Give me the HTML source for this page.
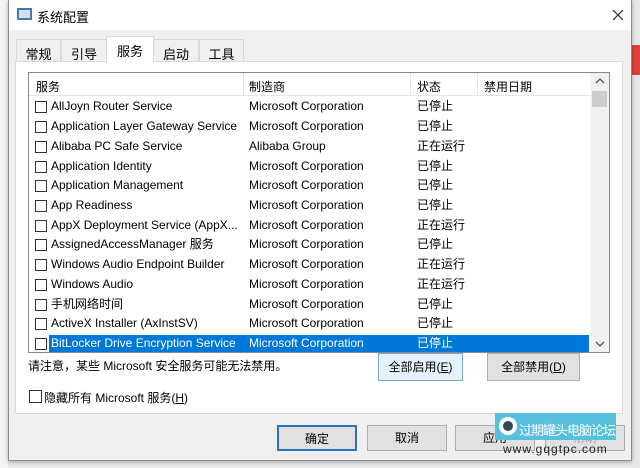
<!DOCTYPE html>
<html><head><meta charset="utf-8"><style>
*{margin:0;padding:0;box-sizing:border-box}
body{width:640px;height:468px;overflow:hidden;background:#e8e8e8;font-family:"Liberation Sans","Noto Sans CJK SC",sans-serif;font-size:12px;color:#000;position:relative}
.abs{position:absolute}
.dlg{left:8px;top:0;width:624px;height:461px;background:#f0f0f0;border:1px solid #8a8a8a;border-top:none;box-shadow:0 1px 4px rgba(0,0,0,.3)}
.title{left:0;top:0;width:622px;height:30px;background:#fff}
.tab{top:39px;height:23px;border:1px solid #d9d9d9;border-bottom:none;background:#f0f0f0;padding:4px 0 0;text-align:center;font-size:13px}
.panel{left:6px;top:61px;width:608px;height:353px;background:#fff;border:1px solid #d9d9d9}
.list{left:28px;top:72px;width:582px;height:281px;border:1px solid #828790;background:#fff;overflow:hidden}
.row{position:absolute;left:0;height:19px;width:562px;line-height:19px;white-space:nowrap}
.row span{position:absolute}
.cb{position:absolute;left:6px;top:4px;width:12px;height:12px;border:1px solid #333;background:#fff}
.sel .t{background:#0078d7;color:#fff}
.btn{position:absolute;height:26px;background:#e1e1e1;border:1px solid #adadad;text-align:center;line-height:24px;font-size:12px}
</style></head><body>
<div class="abs" style="left:0;top:0;width:8px;height:468px;background:#f4f4f4"></div>
<div class="abs" style="left:632px;top:45px;width:8px;height:30px;background:#e0403a"></div>
<div class="abs dlg">
 <div class="abs title">
  <div class="abs" style="left:8px;top:8px;width:15px;height:12px;border:2px solid #4a7aa8;background:#cfe0f0"></div>
  <div class="abs" style="left:28px;top:7px;font-size:13px">系统配置</div>
  <svg class="abs" style="left:603px;top:9px" width="12" height="12"><path d="M1 1L11 11M11 1L1 11" stroke="#222" stroke-width="1.2"/></svg>
 </div>
 <div class="abs tab" style="left:7px;width:45px">常规</div>
 <div class="abs tab" style="left:52px;width:46px">引导</div>
 <div class="abs tab" style="left:144px;width:46px">启动</div>
 <div class="abs tab" style="left:190px;width:45px">工具</div>
 <div class="abs panel"></div>
 <div class="abs tab" style="left:97px;top:36px;width:48px;height:27px;background:#fff;border-color:#d9d9d9">服务</div>
</div>
<div class="abs list">
 <div class="abs" style="left:0;top:0;width:562px;height:23px;border-bottom:1px solid #e5e5e5"></div>
 <div class="abs" style="left:214px;top:0;width:1px;height:23px;background:#e5e5e5"></div>
 <div class="abs" style="left:381px;top:0;width:1px;height:23px;background:#e5e5e5"></div>
 <div class="abs" style="left:448px;top:0;width:1px;height:23px;background:#e5e5e5"></div>
 <div class="abs" style="left:7px;top:5px">服务</div>
 <div class="abs" style="left:220px;top:5px">制造商</div>
 <div class="abs" style="left:388px;top:5px">状态</div>
 <div class="abs" style="left:455px;top:5px">禁用日期</div>
 <div class="abs" style="left:562px;top:0;width:18px;height:279px;background:#f0f0f0"></div>
 <svg class="abs" style="left:566px;top:5px" width="10" height="6"><path d="M1 5L5 1L9 5" stroke="#555" fill="none" stroke-width="1.3"/></svg>
 <div class="abs" style="left:563px;top:18px;width:15px;height:16px;background:#cdcdcd"></div>
 <svg class="abs" style="left:566px;top:268px" width="10" height="6"><path d="M1 1L5 5L9 1" stroke="#555" fill="none" stroke-width="1.3"/></svg>
 <div class="abs" style="left:0;top:24px">
  <div class="row" style="top:0"><i class="cb"></i><span style="left:22px">AllJoyn Router Service</span><span style="left:220px">Microsoft Corporation</span><span style="left:388px">已停止</span></div>
  <div class="row" style="top:20px"><i class="cb"></i><span style="left:22px">Application Layer Gateway Service</span><span style="left:220px">Microsoft Corporation</span><span style="left:388px">已停止</span></div>
  <div class="row" style="top:40px"><i class="cb"></i><span style="left:22px">Alibaba PC Safe Service</span><span style="left:220px">Alibaba Group</span><span style="left:388px">正在运行</span></div>
  <div class="row" style="top:60px"><i class="cb"></i><span style="left:22px">Application Identity</span><span style="left:220px">Microsoft Corporation</span><span style="left:388px">已停止</span></div>
  <div class="row" style="top:79px"><i class="cb"></i><span style="left:22px">Application Management</span><span style="left:220px">Microsoft Corporation</span><span style="left:388px">已停止</span></div>
  <div class="row" style="top:99px"><i class="cb"></i><span style="left:22px">App Readiness</span><span style="left:220px">Microsoft Corporation</span><span style="left:388px">已停止</span></div>
  <div class="row" style="top:119px"><i class="cb"></i><span style="left:22px">AppX Deployment Service (AppX...</span><span style="left:220px">Microsoft Corporation</span><span style="left:388px">正在运行</span></div>
  <div class="row" style="top:138px"><i class="cb"></i><span style="left:22px">AssignedAccessManager 服务</span><span style="left:220px">Microsoft Corporation</span><span style="left:388px">已停止</span></div>
  <div class="row" style="top:158px"><i class="cb"></i><span style="left:22px">Windows Audio Endpoint Builder</span><span style="left:220px">Microsoft Corporation</span><span style="left:388px">正在运行</span></div>
  <div class="row" style="top:178px"><i class="cb"></i><span style="left:22px">Windows Audio</span><span style="left:220px">Microsoft Corporation</span><span style="left:388px">正在运行</span></div>
  <div class="row" style="top:198px"><i class="cb"></i><span style="left:22px">手机网络时间</span><span style="left:220px">Microsoft Corporation</span><span style="left:388px">已停止</span></div>
  <div class="row" style="top:217px"><i class="cb"></i><span style="left:22px">ActiveX Installer (AxInstSV)</span><span style="left:220px">Microsoft Corporation</span><span style="left:388px">已停止</span></div>
  <div class="row sel" style="top:237px"><i class="cb"></i><div class="t abs" style="left:20px;top:1px;width:540px;height:18px"></div><span style="left:22px;color:#fff">BitLocker Drive Encryption Service</span><span style="left:220px;color:#fff">Microsoft Corporation</span><span style="left:388px;color:#fff">已停止</span></div>
 </div>
</div>
<div class="abs" style="left:28px;top:357px">请注意，某些 Microsoft 安全服务可能无法禁用。</div>
<div class="btn" style="left:378px;top:353px;width:85px;height:28px;line-height:26px;background:#e5f1fb;border-color:#7aa7d0">全部启用(<u>E</u>)</div>
<div class="btn" style="left:487px;top:353px;width:93px;height:28px;line-height:26px">全部禁用(<u>D</u>)</div>
<div class="abs" style="left:29px;top:390px;width:13px;height:13px;border:1px solid #333;background:#fff"></div>
<div class="abs" style="left:44px;top:389px">隐藏所有 Microsoft 服务(<u>H</u>)</div>
<div class="btn" style="left:277px;top:425px;width:80px;border:2px solid #2f72b5">确定</div>
<div class="btn" style="left:367px;top:425px;width:80px">取消</div>
<div class="btn" style="left:455px;top:425px;width:80px">应用</div>
<div class="btn" style="left:545px;top:425px;width:80px;color:#aaa">帮助</div>
<div class="abs" style="left:495px;top:413px;width:121px;height:27px;background:#58c0df"></div>
<div class="abs" style="left:499px;top:417px;width:18px;height:18px;border-radius:50%;border:4px solid #fff;background:#2a4a5a"></div>
<div class="abs" style="left:519px;top:420px;color:#fff;font-size:13px;white-space:nowrap;letter-spacing:-1px">过期罐头电脑论坛</div>
<div class="abs" style="left:503px;top:442px;color:#222;font-size:12px;letter-spacing:1px">www.gqgtpc.com</div>
</body></html>
